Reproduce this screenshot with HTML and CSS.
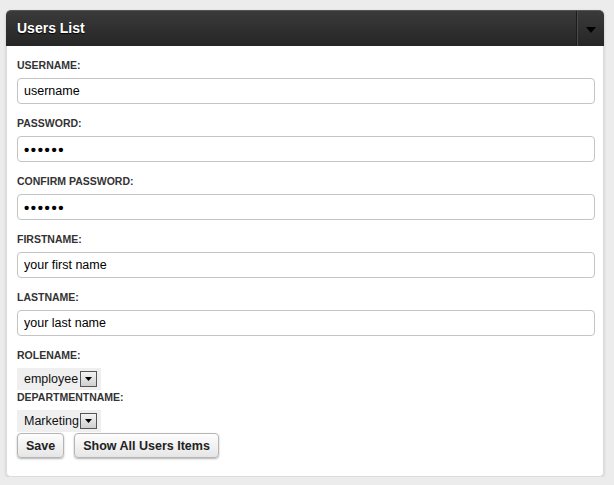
FILE: index.html
```html
<!DOCTYPE html>
<html>
<head>
<meta charset="utf-8">
<link rel="stylesheet" href="styles.css">
</head>
<body>
<div class="panel">
  <div class="panel-header">
    <h2 class="title">Users List</h2>
    <div class="toggle"><svg width="10" height="6" viewBox="0 0 10 6"><path d="M0 0H10L5 6Z" fill="#000"/></svg></div>
  </div>
  <form class="panel-body">
    <label class="lbl">USERNAME:</label>
    <input class="field" type="text" value="username">
    <label class="lbl">PASSWORD:</label>
    <input class="field pw" type="password" value="secret">
    <label class="lbl">CONFIRM PASSWORD:</label>
    <input class="field pw" type="password" value="secret">
    <label class="lbl">FIRSTNAME:</label>
    <input class="field" type="text" value="your first name">
    <label class="lbl">LASTNAME:</label>
    <input class="field" type="text" value="your last name">
    <label class="lbl">ROLENAME:</label>
    <div class="select"><span class="sel-text">employee</span><span class="sel-btn"><svg width="7" height="4" viewBox="0 0 7 4"><path d="M0 0H7L3.5 4Z" fill="#000"/></svg></span></div>
    <label class="lbl tight">DEPARTMENTNAME:</label>
    <div class="select"><span class="sel-text">Marketing</span><span class="sel-btn"><svg width="7" height="4" viewBox="0 0 7 4"><path d="M0 0H7L3.5 4Z" fill="#000"/></svg></span></div>
    <div class="actions">
      <button type="button" class="btn">Save</button>
      <button type="button" class="btn">Show All Users Items</button>
    </div>
  </form>
</div>
</body>
</html>
```
FILE: styles.css
```css
html, body {
  margin: 0;
  padding: 0;
  background: #ececec;
}
body {
  padding: 10px 10px 0 6px;
  font-family: "Liberation Sans", Arial, sans-serif;
  color: #333;
}
.panel {
  width: 598px;
  border-radius: 5px;
  background: #fff;
  box-shadow: 0 1px 3px rgba(0,0,0,0.18);
}
.panel-header {
  display: flex;
  height: 36px;
  border-radius: 5px 5px 0 0;
  background: linear-gradient(#3a3a3a, #262626);
  border-top: 1px solid #555;
  box-sizing: border-box;
}
.title {
  flex: 1;
  margin: 0;
  padding-left: 11px;
  font-size: 14px;
  font-weight: bold;
  color: #fff;
  line-height: 36px;
  margin-top: -1px;
  text-shadow: 0 1px 1px #000;
}
.toggle {
  width: 27px;
  border-left: 1px solid #1c1c1c;
  box-shadow: inset 1px 0 0 #4a4a4a;
  display: flex;
  align-items: center;
  justify-content: center;
  padding-top: 2px;
}
.panel-body {
  display: flex;
  flex-direction: column;
  align-items: flex-start;
  padding: 13px 10px 18px 10px;
  border: 1px solid #dcdcdc;
  border-top: none;
  border-radius: 0 0 5px 5px;
}
.lbl {
  font-size: 10.5px;
  font-weight: bold;
  line-height: 13px;
  color: #333;
  margin-bottom: 6px;
}
.lbl.tight {
  margin-top: 1px;
}
.field {
  box-sizing: border-box;
  width: 578px;
  height: 26px;
  margin: 0 0 13px 0;
  padding: 0 6px;
  border: 1px solid #c4c4c4;
  border-radius: 4px;
  background: #fff;
  font-family: "Liberation Sans", Arial, sans-serif;
  font-size: 12.5px;
  color: #000;
  outline: none;
}
.field.pw {
  font-size: 15px;
  letter-spacing: 1.6px;
  font-weight: bold;
}
.select {
  display: flex;
  align-items: center;
  height: 22px;
  width: 84px;
  box-sizing: border-box;
  background: #efefef;
  padding-left: 7px;
}
.sel-text {
  font-size: 12.5px;
  color: #111;
  width: 56px;
  white-space: nowrap;
}
.sel-btn {
  width: 15px;
  height: 14px;
  border: 1px solid #555;
  background: linear-gradient(#f4f4f4, #cfcfcf);
  display: flex;
  align-items: center;
  justify-content: center;
}
.actions {
  display: flex;
  gap: 10px;
  margin-top: 1px;
}
.btn {
  height: 25px;
  padding: 0 8px;
  border: 1px solid #b5b5b5;
  border-radius: 4px;
  background: linear-gradient(#fdfdfd, #e6e6e6);
  box-shadow: 0 1px 2px rgba(0,0,0,0.3);
  font-family: "Liberation Sans", Arial, sans-serif;
  font-size: 12.5px;
  font-weight: bold;
  color: #222;
  cursor: pointer;
}
```
